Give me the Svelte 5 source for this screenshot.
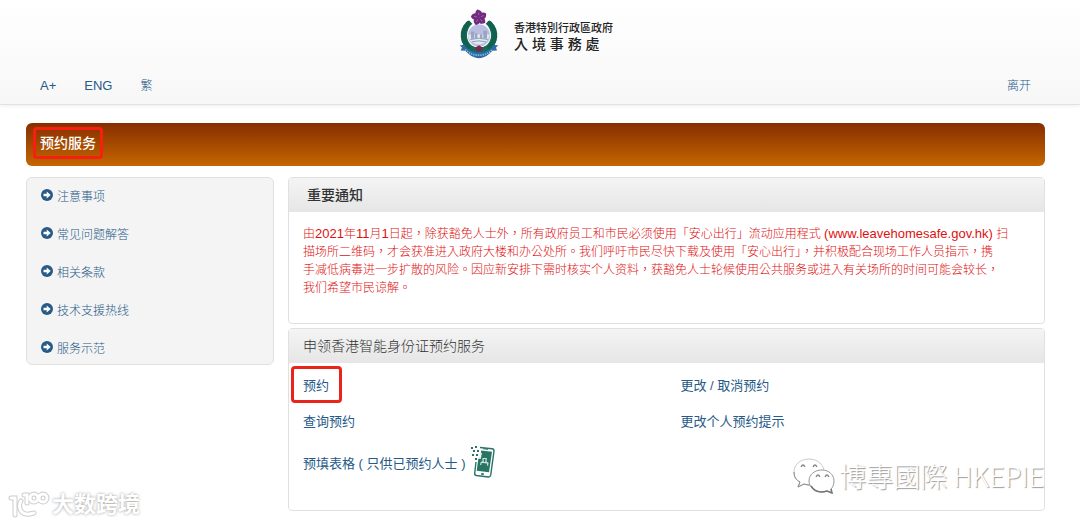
<script lang="ts">
  type Service = { name: string; marked?: boolean; phone?: boolean };

  const menu = ['注意事项', '常见问题解答', '相关条款', '技术支援热线', '服务示范'];

  const services: Service[] = [
    { name: '预约', marked: true },
    { name: '更改 / 取消预约' },
    { name: '查询预约' },
    { name: '更改个人预约提示' },
    { name: '预填表格 ( 只供已预约人士 )', phone: true },
  ];

  const petals = [0, 72, 144, 216, 288];
  const leaves = [0, 1, 2, 3, 4, 5, 6, 7];
</script>

<svelte:head>
  <title>预约服务</title>
</svelte:head>

<header>
  <div class="brand">
    <svg class="emblem" viewBox="0 0 120 152" aria-hidden="true">
      <path d="M30 34C-2 54 -2 106 32 126L60 134 88 126C122 106 122 54 90 34L80 44C102 62 98 98 80 110L60 116 40 110C22 98 18 62 40 44Z" fill="#146b5a" />
      {#each leaves as i}
        <ellipse cx="12" cy="78" rx="7" ry="9" fill="#13604f" transform="rotate({i * 13 - 45} 60 78)" />
        <ellipse cx="108" cy="78" rx="7" ry="9" fill="#13604f" transform="rotate({45 - i * 13} 60 78)" />
      {/each}
      <circle cx="60" cy="79" r="36" fill="#f6f4f8" />
      <circle cx="60" cy="79" r="33" fill="#b7bee0" />
      <path d="M28 76h64a33 33 0 0 1-64 8z" fill="#e3e8ef" />
      <path d="M36 67h10v22H36zM73 65h11v24H73zM48 73h7v15h-7zM63 75h7v13h-7z" fill="#9da4c0" />
      <path d="M34 91q26-8 53 0M39 98q20-6 42 0" fill="none" stroke="#87a6bd" stroke-width="3" />
      <path d="M48 116l12-8 12 8-5 10H53z" fill="#7d2750" />
      <path d="M2 109l14-2c12 18 27 23 44 23s33-5 44-23l14 2-7 6 3 9-14 1c-10 12-24 22-40 22s-31-10-41-22l-14-1 4-9z" fill="#2d6da7" />
      <path d="M19 121q16 17 41 17t41-17" fill="none" stroke="#8fb8d8" stroke-width="5" stroke-dasharray="4 3" />
      {#each petals as angle}
        <g transform="rotate({angle} 60 25)">
          <path d="M60 25C46 17 47 8 55 1C70 4 74 15 60 25Z" fill="#722a80" />
          <path d="M60 18Q58 14 59 10" fill="none" stroke="#b584bb" stroke-width="2" />
        </g>
      {/each}
    </svg>
    <div class="brand-text">
      <span class="gov">香港特別行政區政府</span>
      <span class="dept">入 境 事 務 處</span>
    </div>
  </div>
  <nav>
    <a href="#larger">A+</a>
    <a href="#eng">ENG</a>
    <a href="#trad" class="cjk">繁</a>
    <a href="#leave" class="cjk leave">离开</a>
  </nav>
</header>

<div class="banner">
  <h1 class="mark">预约服务</h1>
</div>

<div class="columns">
  <ul class="menu">
    {#each menu as item}
      <li>
        <a href="#menu">
          <svg viewBox="0 0 12 12" aria-hidden="true">
            <circle cx="6" cy="6" r="6" fill="#265a88" />
            <path d="M2.5 4.8h3.2V2.6L9.7 6 5.7 9.4V7.2H2.5z" fill="#fff" />
          </svg>
          {item}
        </a>
      </li>
    {/each}
  </ul>

  <main>
    <section class="panel">
      <h2 class="strong">重要通知</h2>
      <p>
        由<span>2021</span>年<span>11</span>月<span>1</span>日起，除获豁免人士外，所有政府员工和市民必须使用「安心出行」流动应用程式 <span>(www.leavehomesafe.gov.hk)</span> 扫<br />
        描场所二维码，才会获准进入政府大楼和办公处所。我们呼吁市民尽快下载及使用「安心出行」，并积极配合现场工作人员指示，携<br />
        手减低病毒进一步扩散的风险。因应新安排下需时核实个人资料，获豁免人士轮候使用公共服务或进入有关场所的时间可能会较长，<br />
        我们希望市民谅解。
      </p>
    </section>

    <section class="panel">
      <h2>申领香港智能身份证预约服务</h2>
      <div class="services">
        {#each services as service}
          <div class="service" class:tall={service.phone}>
            <a href="#service" class:marked={service.marked}>{service.name}</a>
            {#if service.phone}
              <svg class="phone" viewBox="0 0 24 32" aria-hidden="true">
                <path d="M9 1.5l12 1.2q2.2.3 2 2.5l-3.3 24q-.4 2-2.4 1.8L5.5 29.5q-2-.3-1.8-2.3L5 16" fill="#fff" stroke="#287565" stroke-width="1.4" />
                <path d="M10 4.5l11 1.2-3 20.5-12.3-1.5L7.3 13l3-2z" fill="#287565" />
                <path d="M12 2.8l5 .5" stroke="#287565" />
                <ellipse cx="11.5" cy="28" rx="1.6" ry=".9" fill="#287565" />
                <path d="M9.7 19l.5-2.5 2-.8-.2-3.2h3.2l-.3 3.4 2 1.2-.4 2.6M10.7 16.2l5 .6" fill="none" stroke="#cde5dc" stroke-width="1.2" />
                <path d="M0 1h2v2H0zM4 0h2v2H4zM2 4h2v2H2zM6 4h2v2H6zM1 8h2v2H1zM5 8h2v2H5zM4 12h2v2H4z" fill="#287565" />
                <path d="M9 7h2v2H9zM8 11h2v2H8z" fill="#cde5dc" />
              </svg>
            {/if}
          </div>
        {/each}
      </div>
    </section>
  </main>
</div>

<div class="watermark right">
  <svg viewBox="0 0 42 36" aria-hidden="true">
    <g stroke-width="1">
      <path d="M16 1C7 1 1 7 1 14c0 5 2 8 6 10l-2 5 6-3q3 1 8 1c8-1 12-6 12-13S25 1 16 1z" fill="#fff" stroke="#ccc" />
      <path d="M1 14c0 5 2 8 6 10l-2 5 6-3q3 1 6 1" fill="none" stroke="#888" />
      <path d="M29 12c-8 0-13 5-13 11s6 11 13 11q3 0 5-1l5 2-1-4c2-2 3-5 3-8 0-6-5-11-12-11z" fill="#fff" stroke="#999" />
      <path d="M18 28c3 5 9 7 16 5l5 2-1-4" fill="none" stroke="#777" stroke-width="1.5" />
    </g>
    <path d="M8 9q2-4 4 0M20 9q2-4 4 0M23 19q2-4 4 0M32 19q2-4 4 0" fill="none" stroke="#888" stroke-width="1.3" />
  </svg>
  <span>博專國際 HKEPIE</span>
</div>

<div class="watermark left">
  <svg viewBox="0 0 42 28" aria-hidden="true">
    <g fill="none" stroke-linecap="round">
      {#each ['#ccc', '#fff'] as color, i}
        <g stroke={color} stroke-width={i ? 3 : 5}>
          <path d="M3 7h4v17" />
          <path d="M13 10q-3 5 0 10t13 2" />
          <path d="M16 4h3v8" />
          <circle cx="26" cy="7" r="4" />
          <circle cx="35" cy="7" r="4" />
        </g>
      {/each}
    </g>
  </svg>
  <span>大数跨境</span>
</div>

<style>
  :global(body) {
    margin: 0;
    background: #fff;
    color: #333;
    font-family: 'Liberation Sans', 'Noto Sans CJK TC', sans-serif;
    font-size: 12px;
  }

  a {
    color: #265a88;
    text-decoration: none;
  }

  header {
    height: 104px;
    background: linear-gradient(#fff, #f7f7f7);
    border-bottom: 1px solid #e2e2e2;
    box-shadow: 0 1px 4px #eee;
  }

  .brand {
    display: flex;
    justify-content: center;
    gap: 15px;
    padding: 9px 8px 0 0;
  }

  .emblem {
    width: 40px;
    height: 51px;
  }

  .brand-text {
    display: flex;
    flex-direction: column;
    padding-top: 12px;
    color: #222;
    font-weight: 500;
  }

  .gov {
    font-size: 11px;
    line-height: 14px;
  }

  .dept {
    font-size: 14px;
    line-height: 18px;
  }

  nav {
    display: flex;
    gap: 28px;
    padding: 16px 49px 0 40px;
    font-size: 13px;
    line-height: 20px;
  }

  nav .cjk {
    font-size: 12px;
    font-weight: 300;
  }

  nav .leave {
    margin-left: auto;
  }

  .banner {
    display: flex;
    align-items: center;
    margin: 18px 35px 12px 26px;
    padding: 4px 7px 7px;
    background: linear-gradient(#862e00, #c66600);
    border-radius: 6px;
  }

  .mark {
    margin: 0;
    padding: 0 4px;
    border: 3px solid #f5200f;
    border-radius: 4px;
    color: #fff;
    font-size: 14px;
    line-height: 26px;
    font-weight: 500;
  }

  .columns {
    display: flex;
    align-items: flex-start;
    gap: 14px;
    margin: -1px 35px 0 26px;
  }

  .menu {
    flex: 0 0 246px;
    display: grid;
    gap: 4px;
    margin: 0;
    padding: 0;
    list-style: none;
    background: #f4f4f4;
    border: 1px solid #e0e0e0;
    border-radius: 6px;
  }

  .menu a {
    display: flex;
    align-items: center;
    gap: 4px;
    height: 34px;
    padding-left: 14px;
    font-weight: 300;
  }

  .menu svg {
    width: 12px;
    height: 12px;
  }

  main {
    flex: 1;
    display: grid;
    gap: 4px;
  }

  .panel {
    border: 1px solid #e0e0e0;
    border-radius: 4px;
  }

  h2 {
    margin: 0;
    padding: 0 14px;
    background: linear-gradient(#f4f4f4, #e6e6e6);
    font-size: 14px;
    line-height: 34px;
    font-weight: 300;
  }

  h2.strong {
    padding: 0 18px;
    font-weight: 500;
  }

  p {
    margin: 0;
    padding: 13px 14px 26px;
    color: #e01010;
    font-weight: 300;
    line-height: 18px;
  }

  p span {
    font-size: 13px;
  }

  .services {
    display: grid;
    grid-template-columns: 1fr 1fr;
    padding: 3px 0 24px;
  }

  .service {
    display: flex;
    align-items: center;
    gap: 5px;
    height: 36px;
    padding-left: 14px;
    font-size: 13px;
  }

  .service.tall {
    height: 48px;
  }

  .service a {
    position: relative;
  }

  .marked::after {
    content: '';
    position: absolute;
    inset: -9px -13px -9px -12px;
    border: 3px solid #e8241b;
    border-radius: 4px;
  }

  .phone {
    width: 24px;
    height: 32px;
  }

  .watermark {
    position: absolute;
    display: flex;
    align-items: center;
    color: #fff;
    white-space: nowrap;
    pointer-events: none;
  }

  .right {
    top: 456px;
    right: 36px;
    gap: 4px;
    font-family: 'Noto Sans CJK TC', sans-serif;
    font-size: 27px;
    line-height: 40px;
    font-weight: 300;
    text-shadow: 1px 1px 1px #999;
  }

  .right svg {
    width: 42px;
    height: 36px;
  }

  .left {
    top: 488px;
    left: 8px;
    gap: 2px;
    font-size: 22px;
    line-height: 34px;
    font-weight: 700;
    text-shadow: 0 0 3px #999;
  }

  .left svg {
    width: 42px;
    height: 28px;
  }
</style>
